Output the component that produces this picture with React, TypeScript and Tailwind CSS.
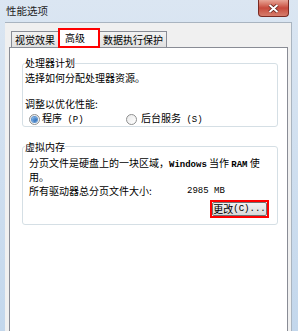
import React from "react"

const cjk = { fontFamily: '"Noto Sans CJK SC", "Noto Sans", sans-serif' }
const mono = { fontFamily: '"Liberation Mono", "Noto Sans CJK SC", monospace' }

function Radio({ checked }: { checked?: boolean }) {
  return (
    <span className="flex h-[11px] w-[11px] items-center justify-center rounded-full border border-[#8e8f8f] bg-gradient-to-br from-[#e9e9e9] to-[#ffffff]">
      {checked && (
        <span className="h-[5px] w-[5px] rounded-full bg-gradient-to-br from-[#7fb8ee] to-[#1c5fae] ring-1 ring-[#5d93cf]" />
      )}
    </span>
  )
}

function Tab({ label, selected }: { label: string; selected?: boolean }) {
  if (selected) {
    return (
      <div className="relative z-10 -mb-px flex h-[20px] items-start border border-b-0 border-[#898c95] bg-white pl-[5px] pr-[13px] pt-[2px]">
        <span className="leading-[14px]">{label}</span>
        <div className="pointer-events-none absolute -left-[2px] -right-[2px] -top-[1px] bottom-0 border-2 border-[#ff0000]" />
      </div>
    )
  }
  return (
    <div className="flex h-[16px] items-center border border-b-0 border-[#898c95] bg-gradient-to-b from-[#f2f2f2] to-[#e0e0e0] px-[3px]">
      <span className="leading-[14px]">{label}</span>
    </div>
  )
}

export default function App() {
  return (
    <div
      className="flex h-[331px] w-[298px] flex-col overflow-hidden bg-gradient-to-b from-[#dbe6f2] to-[#c3d7ec] text-[10px] text-black"
      style={cjk}
    >
      {/* title bar */}
      <div className="flex h-[22px] shrink-0 items-start justify-between pl-[6px] pr-[9px]">
        <span className="pt-[4px] text-[10.5px] leading-[14px] text-[#1e1e1e]">性能选项</span>
        <div className="flex h-[17px] w-[31px] items-center justify-center rounded-b-[4px] border border-t-0 border-[#7a2a22] bg-gradient-to-b from-[#e7a597] via-[#c6493c] to-[#d67d6c]">
          <svg width="11" height="9" viewBox="0 0 11 9">
            <path d="M1.5 1 L9.5 8 M9.5 1 L1.5 8" stroke="#5a1d16" strokeWidth="3.4" />
            <path d="M1.5 1 L9.5 8 M9.5 1 L1.5 8" stroke="#ffffff" strokeWidth="2" />
          </svg>
        </div>
      </div>

      {/* client area */}
      <div className="ml-[5px] mr-[6px] flex flex-1 flex-col border-r border-t border-[#a9b4c0] bg-[#f0f0f0] pl-[4px] pr-[3px] pt-[4px]">
        <div className="flex h-[20px] shrink-0 items-end pl-[2px]">
          <Tab label="视觉效果" />
          <Tab label="高级" selected />
          <Tab label="数据执行保护" />
        </div>

        <div className="flex flex-1 flex-col border border-b-0 border-[#898c95] bg-white">
          <fieldset className="ml-[12px] mr-[9px] mt-[9px] rounded-[3px] border border-[#d5dfe5] px-[2px] pb-[1px]">
            <legend className="leading-[12px]">处理器计划</legend>
            <p className="pt-[3px] leading-[12px]">选择如何分配处理器资源。</p>
            <p className="mt-[14px] leading-[12px]">调整以优化性能:</p>
            <div className="mt-[3px] flex h-[12px] items-center pl-[4px]">
              <div className="flex w-[97px] items-center gap-[2px]">
                <Radio checked />
                <span className="leading-[12px]">
                  程序<span style={mono} className="text-[9px]"> (P)</span>
                </span>
              </div>
              <div className="flex items-center gap-[4px]">
                <Radio />
                <span className="leading-[12px]">
                  后台服务<span style={mono} className="text-[9px]"> (S)</span>
                </span>
              </div>
            </div>
          </fieldset>

          <fieldset className="ml-[12px] mr-[9px] mt-[13px] rounded-[3px] border border-[#d5dfe5] px-[2px] pb-[6px]">
            <legend className="leading-[13px]">虚拟内存</legend>
            <div className="pl-[4px]">
              <p className="pt-[4px] leading-[11px]">
                分页文件是硬盘上的一块区域，<span style={mono} className="text-[9px] font-bold">Windows</span> 当作{" "}
                <span style={mono} className="text-[9px] font-bold">RAM</span> 使
                <br />
                用。
              </p>
              <div className="mt-[3px] flex leading-[12px]">
                <span className="w-[158px] shrink-0">所有驱动器总分页文件大小:</span>
                <span style={mono} className="text-[9px]">2985 MB</span>
              </div>
            </div>
            <div className="mt-[3px] flex justify-end pr-[6px]">
              <div className="border-2 border-[#ff0000]">
                <div className="flex h-[14px] w-[55px] items-center justify-center whitespace-nowrap rounded-[2px] border border-[#707070] bg-gradient-to-b from-[#f2f2f2] to-[#d9d9d9] leading-[12px]">
                  更改<span style={mono} className="text-[9px]">(C)...</span>
                </div>
              </div>
            </div>
          </fieldset>
        </div>
      </div>
    </div>
  )
}
